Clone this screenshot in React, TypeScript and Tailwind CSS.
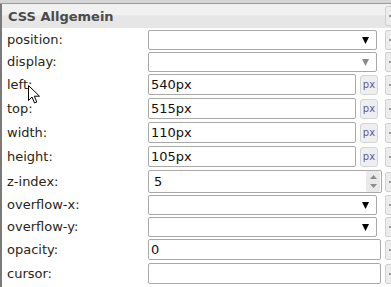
type Kind = "select" | "selectDim" | "px" | "number" | "text";

type Row = { label: string; kind: Kind; value?: string; mt: string; h: string };

const rows: Row[] = [
  { label: "position:", kind: "select", mt: "mt-[2px]", h: "h-[20px]" },
  { label: "display:", kind: "selectDim", mt: "mt-[2px]", h: "h-[20px]" },
  { label: "left:", kind: "px", value: "540px", mt: "mt-[2px]", h: "h-[21px]" },
  { label: "top:", kind: "px", value: "515px", mt: "mt-[3px]", h: "h-[21px]" },
  { label: "width:", kind: "px", value: "110px", mt: "mt-[3px]", h: "h-[21px]" },
  { label: "height:", kind: "px", value: "105px", mt: "mt-[3px]", h: "h-[21px]" },
  { label: "z-index:", kind: "number", value: "5", mt: "mt-[3px]", h: "h-[23px]" },
  { label: "overflow-x:", kind: "select", mt: "mt-[2px]", h: "h-[20px]" },
  { label: "overflow-y:", kind: "select", mt: "mt-[2px]", h: "h-[20px]" },
  { label: "opacity:", kind: "text", value: "0", mt: "mt-[2px]", h: "h-[21px]" },
  { label: "cursor:", kind: "text", value: "", mt: "mt-[3px]", h: "h-[21px]" },
];

function Arrow({ dim }: { dim?: boolean }) {
  return (
    <svg width="7" height="7" viewBox="0 0 7 7" className="mr-[7px]">
      <polygon points="0,0 7,0 3.5,7" fill={dim ? "#8a8a8a" : "#000"} />
    </svg>
  );
}

// button at the right edge, cut off by the window
function SideButton({ h }: { h: string }) {
  return (
    <div className={`ml-auto -mr-[10px] w-[16px] ${h} shrink-0 rounded-[2px] border border-[#d0d0d0] bg-[#ececec] flex items-center pl-[3px]`}>
      <span className="block w-[3px] h-[2px] bg-[#999]" />
    </div>
  );
}

function Control({ row }: { row: Row }) {
  const box = `${row.h} rounded-[2px] border border-[#a9a9a9] bg-white`;
  if (row.kind === "select" || row.kind === "selectDim") {
    return (
      <>
        <div className={`${box} w-[229px] flex items-center justify-end`}>
          <Arrow dim={row.kind === "selectDim"} />
        </div>
        <SideButton h="h-[20px]" />
      </>
    );
  }
  if (row.kind === "px") {
    return (
      <>
        <div className={`${box} w-[208px] flex items-center pl-[2px] text-[13px] text-[#111]`}>{row.value}</div>
        <div className="ml-[4px] w-[18px] h-[20px] rounded-[3px] border border-[#d4d4d4] bg-[#efefef] flex items-center justify-center text-[10px] text-[#5a5a9a]">
          px
        </div>
        <SideButton h="h-[20px]" />
      </>
    );
  }
  if (row.kind === "number") {
    return (
      <>
        <div className={`${box} w-[234px] flex items-center pl-[5px] pr-[1px] text-[13px] text-[#111]`}>
          <span className="flex-1">{row.value}</span>
          <div className="w-[14px] h-[21px] bg-[#e9e9e9] rounded-[2px] flex flex-col items-center justify-around py-[2px]">
            <svg width="7" height="4" viewBox="0 0 7 4">
              <polygon points="0,4 7,4 3.5,0" fill="#8c8c8c" />
            </svg>
            <svg width="7" height="4" viewBox="0 0 7 4">
              <polygon points="0,0 7,0 3.5,4" fill="#8c8c8c" />
            </svg>
          </div>
        </div>
        <SideButton h="h-[20px]" />
      </>
    );
  }
  return (
    <>
      <div className={`${box} w-[233px] flex items-center pl-[2px] text-[13px] text-[#111]`}>{row.value}</div>
      <SideButton h="h-[20px]" />
    </>
  );
}

export default function App() {
  return (
    <div className="relative w-[391px] h-[287px] overflow-hidden bg-white font-['DejaVu_Sans',sans-serif]">
      <div className="h-[4px] bg-[#d5d5d5] border-b border-[#9c9c9c]" />
      <div className="flex h-[283px]">
        <div className="w-[2px] bg-[#7a7a7a] shrink-0" />
        <div className="flex-1 flex flex-col">
          <div className="h-[24px] pl-[6px] flex items-center bg-[linear-gradient(#f1f1f1_0%,#f1f1f1_45%,#e6e6e6_50%,#e6e6e6_100%)]">
            <span className="text-[13px] font-bold text-[#4b4b4b] pt-[1px]">CSS Allgemein</span>
            <SideButton h="h-[20px]" />
          </div>
          {rows.map((row) => (
            <div key={row.label} className={`flex items-center ${row.mt}`}>
              <span className="w-[146px] shrink-0 pl-[5px] text-[13px] text-[#2b2415]">{row.label}</span>
              <Control row={row} />
            </div>
          ))}
        </div>
      </div>
      <svg className="absolute left-[28px] top-[85px]" width="13" height="19" viewBox="0 0 13 19">
        <path d="M0.5 0.5 L0.5 15.5 L4 12 L6.5 18 L8.8 17 L6.3 11.2 L11.5 11.2 Z" fill="#fff" stroke="#000" strokeWidth="1" />
      </svg>
    </div>
  );
}
